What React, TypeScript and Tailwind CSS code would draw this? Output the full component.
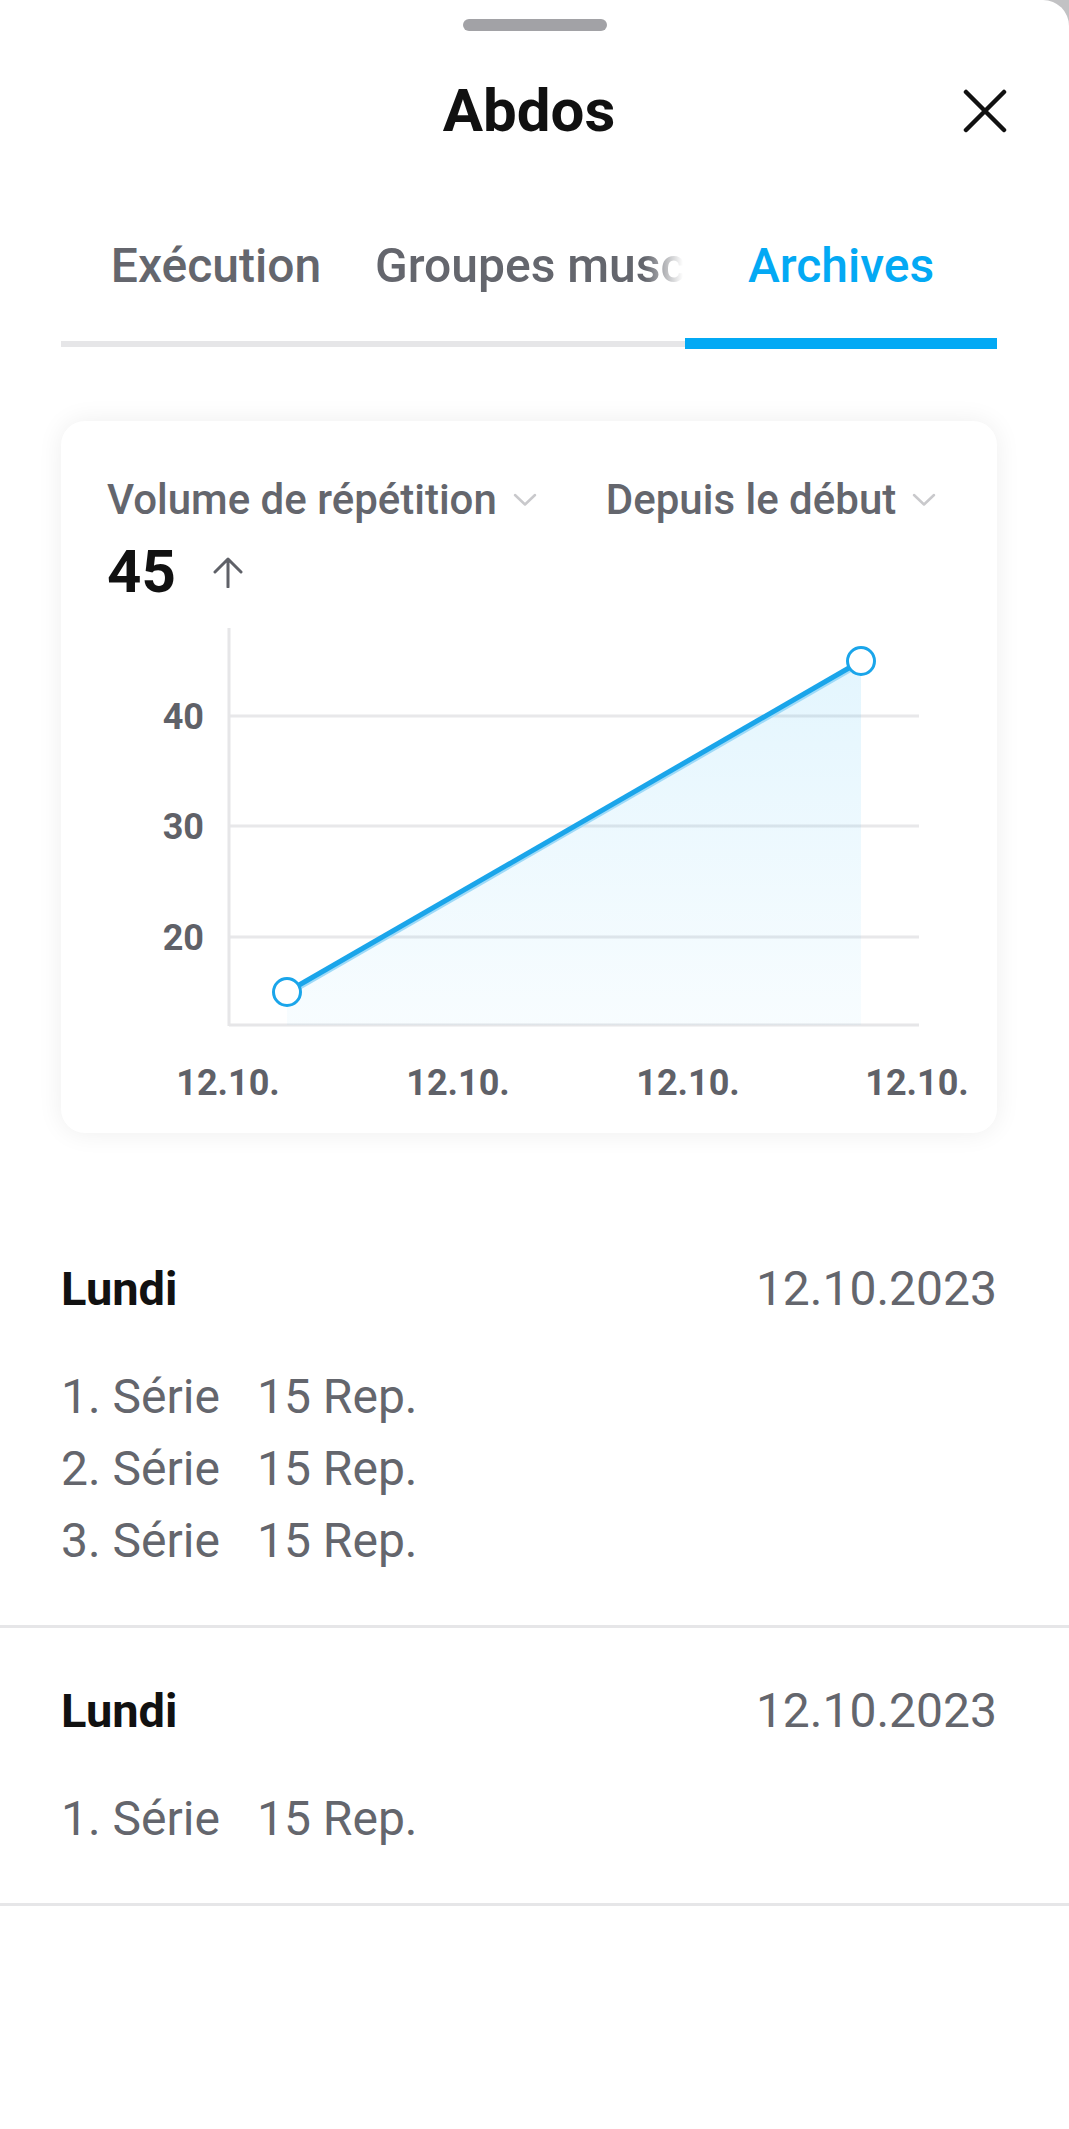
const BLUE = "#03a9f4";

const sessions = [
  { day: "Lundi", date: "12.10.2023", sets: [15, 15, 15] },
  { day: "Lundi", date: "12.10.2023", sets: [15] },
];

function CloseIcon() {
  return (
    <svg width="44" height="44" viewBox="0 0 44 44" fill="none">
      <path d="M3 3 L41 41 M41 3 L3 41" stroke="#111" strokeWidth="4.5" strokeLinecap="round" />
    </svg>
  );
}

function Chevron() {
  return (
    <svg width="24" height="14" viewBox="0 0 24 14" fill="none" className="shrink-0">
      <path d="M2 2 L12 11.5 L22 2" stroke="#c9c9cc" strokeWidth="2.5" strokeLinecap="round" strokeLinejoin="round" />
    </svg>
  );
}

function ArrowUp() {
  return (
    <svg width="32" height="32" viewBox="0 0 32 32" fill="none">
      <path d="M16 3 V31 M3 16 L16 3 L29 16" stroke="#5f6168" strokeWidth="3" strokeLinecap="round" strokeLinejoin="round" />
    </svg>
  );
}

// y grid at 40 / 30 / 20, x axis near 12
const gridY = [
  { v: 40, y: 115 },
  { v: 30, y: 225 },
  { v: 20, y: 336 },
];
const xLabels = [167, 397, 627, 856];

function VolumeChart() {
  return (
    <svg width="936" height="532" viewBox="0 0 936 532" className="block">
      <defs>
        <linearGradient id="area" x1="0" y1="0" x2="0" y2="1">
          <stop offset="0%" stopColor={BLUE} stopOpacity="0.11" />
          <stop offset="100%" stopColor={BLUE} stopOpacity="0.03" />
        </linearGradient>
      </defs>
      {gridY.map((g) => (
        <line key={g.v} x1="168" x2="858" y1={g.y} y2={g.y} stroke="#e8e8ea" strokeWidth="3" />
      ))}
      <line x1="168" x2="168" y1="27" y2="425" stroke="#e6e6e8" strokeWidth="3" />
      <line x1="168" x2="858" y1="424" y2="424" stroke="#e6e6e8" strokeWidth="3" />
      <path d="M226 391 L800 60 L800 424 L226 424 Z" fill="url(#area)" />
      <line x1="226" y1="394" x2="800" y2="63" stroke="#9fdaf7" strokeWidth="4" />
      <line x1="226" y1="391" x2="800" y2="60" stroke="#1aa5ea" strokeWidth="5" />
      <circle cx="226" cy="391" r="13.5" fill="#fff" stroke="#1aa5ea" strokeWidth="3" />
      <circle cx="800" cy="60" r="13.5" fill="#fff" stroke="#1aa5ea" strokeWidth="3" />
      {gridY.map((g) => (
        <text
          key={g.v}
          x="143"
          y={g.y + 13}
          textAnchor="end"
          fontFamily="Roboto, sans-serif"
          fontWeight="700"
          fontSize="36"
          fill="#5f6168"
        >
          {g.v}
        </text>
      ))}
      {xLabels.map((x) => (
        <text
          key={x}
          x={x}
          y="494"
          textAnchor="middle"
          fontFamily="Roboto, sans-serif"
          fontWeight="700"
          fontSize="36"
          fill="#5f6168"
        >
          12.10.
        </text>
      ))}
    </svg>
  );
}

export default function App() {
  return (
    <div className="min-h-screen bg-[#c2c2c4] font-['Roboto',sans-serif]">
      <div className="min-h-[2129px] rounded-tr-[26px] bg-white">
        {/* Drag handle */}
        <div className="flex justify-center pt-[19px]">
          <div className="h-[12px] w-[144px] rounded-full bg-[#a2a2a6]" />
        </div>

        <div className="pl-[61px] pr-[72px]">
          {/* Title */}
          <div className="mt-[50px] grid h-[56px] grid-cols-[1fr_auto_1fr] items-center">
            <div />
            <h1 className="text-[60px] font-bold leading-none text-[#111]">Abdos</h1>
            <div className="flex justify-end">
              <button className="-mr-[10px]">
                <CloseIcon />
              </button>
            </div>
          </div>

          {/* Tabs */}
          <div className="mt-[105px] flex text-[48px] font-medium leading-[48px]">
            <div className="w-[310px] shrink-0 pb-[48px] text-center text-[#64666d]">Exécution</div>
            <div className="w-[314px] shrink-0 overflow-hidden whitespace-nowrap pb-[48px] pl-[4px] text-[#64666d] [mask-image:linear-gradient(to_right,#000_calc(100%-40px),transparent_calc(100%-2px))]">
              Groupes musculaires
            </div>
            <div className="w-[312px] shrink-0 pb-[48px] text-center text-[#03a9f4]">Archives</div>
          </div>
          <div className="flex h-[11px] items-center">
            <div className="h-[6px] flex-1 bg-[#e6e6e8]" />
            <div className="h-[11px] w-[312px] bg-[#03a9f4]" />
          </div>

          {/* Stats card */}
          <div className="mt-[72px] h-[712px] overflow-hidden rounded-[24px] bg-white pt-[55px] shadow-[0_0_26px_rgba(0,0,0,0.07)]">
            <div className="px-[46px]">
              <div className="flex items-center gap-[69px] text-[42px] font-medium leading-[47px] text-[#64666d]">
                <div className="flex items-center gap-[16px]">
                  <span>Volume de répétition</span>
                  <Chevron />
                </div>
                <div className="flex items-center gap-[16px]">
                  <span>Depuis le début</span>
                  <Chevron />
                </div>
              </div>
              <div className="mt-[20px] flex h-[58px] items-center gap-[36px]">
                <span className="text-[60px] font-bold leading-none text-[#111]">45</span>
                <ArrowUp />
              </div>
            </div>
            <VolumeChart />
          </div>
        </div>

        {/* History */}
        <div className="mt-[73px]">
          {sessions.map((s, i) => (
            <div key={i} className="border-b-[3px] border-[#e6e6e8] pb-[48px] pl-[61px] pr-[72px] pt-[55px]">
              <div className="flex items-center justify-between leading-[56px]">
                <span className="text-[47px] font-bold text-[#111]">{s.day}</span>
                <span className="text-[48px] text-[#64666d]">{s.date}</span>
              </div>
              <div className="mt-[44px] text-[48px] leading-[72px] text-[#64666d]">
                {s.sets.map((reps, n) => (
                  <div key={n} className="flex">
                    <span className="w-[196px] shrink-0">{n + 1}. Série</span>
                    <span>{reps} Rep.</span>
                  </div>
                ))}
              </div>
            </div>
          ))}
        </div>
      </div>
    </div>
  );
}
